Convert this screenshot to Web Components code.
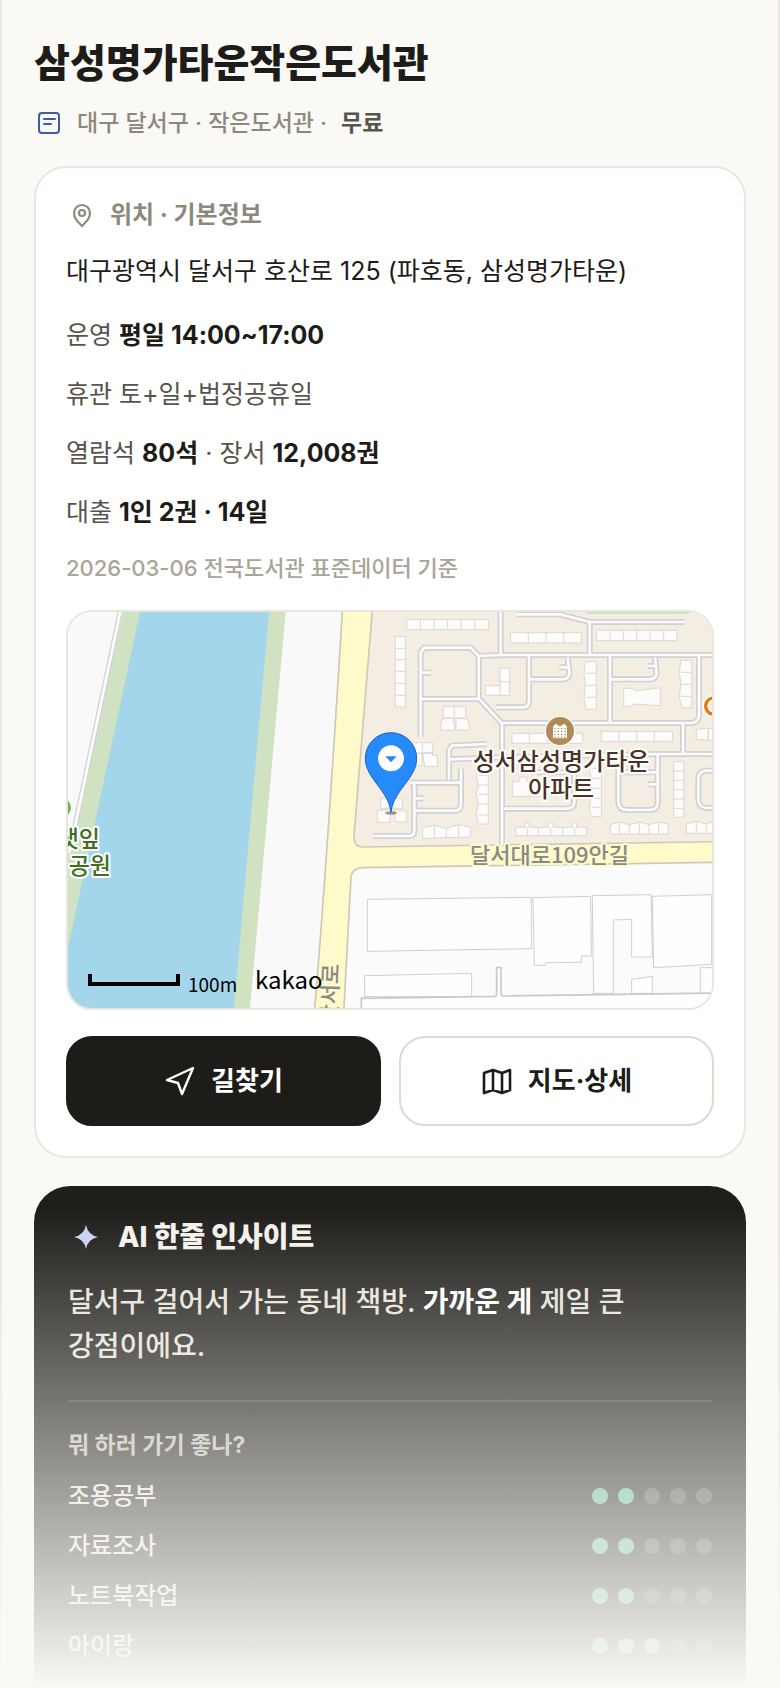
<!DOCTYPE html>
<html lang="ko">
<head>
<meta charset="utf-8">
<meta name="viewport" content="width=device-width, initial-scale=1">
<title>삼성명가타운작은도서관</title>
<style>
    body {
        margin: 0;
        background: #faf9f5;
        color: #1d1c18;
        font-family: Inter, "Noto Sans CJK KR", sans-serif;
        font-size: 24px;
    }
    insight-card b { color: #fff; }
</style>
</head>
<body>
<library-page>
    <place-header>
        <span slot="name">삼성명가타운작은도서관</span>
        <span slot="meta">대구 달서구 · 작은도서관 ·</span>
        <span slot="price">무료</span>
    </place-header>
    <info-card>
        <span slot="title">위치 · 기본정보</span>
        <span slot="address">대구광역시 달서구 호산로 125 (파호동, 삼성명가타운)</span>
        <info-row>운영 <b>평일 14:00~17:00</b></info-row>
        <info-row>휴관 토+일+법정공휴일</info-row>
        <info-row>열람석 <b>80석</b> · 장서 <b>12,008권</b></info-row>
        <info-row>대출 <b>1인 2권 · 14일</b></info-row>
        <span slot="source">2026-03-06 전국도서관 표준데이터 기준</span>
        <place-map slot="map"></place-map>
        <action-button slot="actions" icon="route" primary>길찾기</action-button>
        <action-button slot="actions" icon="map">지도·상세</action-button>
    </info-card>
    <insight-card>
        <span slot="title">AI 한줄 인사이트</span>
        <span slot="summary">달서구 걸어서 가는 동네 책방. <b>가까운 게</b> 제일 큰 강점이에요.</span>
        <span slot="question">뭐 하러 가기 좋나?</span>
        <score-row score="2">조용공부</score-row>
        <score-row score="2">자료조사</score-row>
        <score-row score="2">노트북작업</score-row>
        <score-row score="3">아이랑</score-row>
    </insight-card>
</library-page>

<script>
const icons = {
    note: `<svg width="28" height="28" viewBox="0 0 28 28" fill="none" stroke="currentColor" stroke-width="2" stroke-linecap="round" stroke-linejoin="round">
        <rect x="4" y="4" width="20" height="20" rx="3"/><path d="M9 10h11M9 15h7"/></svg>`,
    pin: `<svg width="28" height="28" viewBox="0 0 28 28" fill="none" stroke="currentColor" stroke-width="2.2" stroke-linejoin="round">
        <path d="M14 25C9 20 6 17 6 12a8 8 0 0 1 16 0c0 5-3 8-8 13z"/><circle cx="14" cy="12" r="3"/></svg>`,
    route: `<svg width="32" height="32" viewBox="0 0 32 32" fill="none" stroke="currentColor" stroke-width="2.4" stroke-linejoin="round">
        <path d="M29 3 3 15l11 3 4 11z"/></svg>`,
    map: `<svg width="32" height="32" viewBox="0 0 32 32" fill="none" stroke="currentColor" stroke-width="2.6" stroke-linejoin="round">
        <path d="M3 8l9-3 9 3 8-3v20l-8 3-9-3-9 3zM12 5v20M21 8v20"/></svg>`,
    spark: `<svg width="28" height="28" viewBox="0 0 28 28" fill="currentColor">
        <path d="M14 2q2 10 12 12q-10 2-12 12q-2-10-12-12q10-2 12-12z"/></svg>`
};

class BaseElement extends HTMLElement {
    constructor(){
        super();
        this.attachShadow({ mode: "open" });
    }
    connectedCallback(){
        const template = document.createElement('template');
        template.innerHTML = this.getStyles() + this.getTemplate();
        this.shadowRoot.replaceChildren(template.content.cloneNode(true));
    }
}

class LibraryPage extends BaseElement {
    getTemplate(){
        return `<main><slot></slot></main><div class="fade"></div>`;
    }
    getStyles(){
        return `
            <style>
                :host {
                    display: block;
                    position: relative;
                    box-sizing: border-box;
                    min-height: 100vh;
                    border: solid #e9e7e0;
                    border-width: 0 2px;
                }
                main {
                    display: flex;
                    flex-direction: column;
                    padding: 37px 32px 0;
                }
                /* covers the side borders too */
                .fade {
                    position: absolute;
                    left: -2px;
                    right: -2px;
                    bottom: 0;
                    height: 480px;
                    background: linear-gradient(rgba(250, 249, 245, 0), #faf9f5);
                    pointer-events: none;
                }
            </style>
        `;
    }
}

class PlaceHeader extends BaseElement {
    getTemplate(){
        return `
            <h1><slot name="name"></slot></h1>
            <p>${icons.note}<slot name="meta"></slot><strong><slot name="price"></slot></strong></p>
        `;
    }
    getStyles(){
        return `
            <style>
                :host { display: block; margin-bottom: 25px; }
                h1 {
                    margin: 0 0 16px;
                    font-size: 39px;
                    line-height: 52px;
                    font-weight: 800;
                }
                p {
                    display: flex;
                    align-items: center;
                    gap: 14px;
                    margin: 0;
                    font-size: 23px;
                    line-height: 36px;
                    font-weight: 500;
                    color: #8c887c;
                }
                svg { margin-left: 1px; color: #3f5bab; }
                strong { font-weight: 700; color: #57544b; }
            </style>
        `;
    }
}

class InfoCard extends BaseElement {
    getTemplate(){
        return `
            <section>
                <h2>${icons.pin}<slot name="title"></slot></h2>
                <p class="address"><slot name="address"></slot></p>
                <div class="rows"><slot></slot></div>
                <p class="source"><slot name="source"></slot></p>
                <slot name="map"></slot>
                <div class="actions"><slot name="actions"></slot></div>
            </section>
        `;
    }
    getStyles(){
        return `
            <style>
                :host { display: block; margin-bottom: 28px; }
                section {
                    padding: 30px;
                    border: 2px solid #e9e7e0;
                    border-radius: 32px;
                    background: #fff;
                }
                h2 {
                    display: flex;
                    align-items: center;
                    gap: 14px;
                    margin: 0 0 19px 2px;
                    font-size: 24px;
                    line-height: 34px;
                    font-weight: 700;
                    color: #8c887c;
                }
                p { margin: 0; }
                .address { font-size: 25px; line-height: 40px; }
                .rows {
                    display: flex;
                    flex-direction: column;
                    gap: 19px;
                    margin: 24px 0 19px;
                }
                .source {
                    margin-bottom: 25px;
                    font-size: 22px;
                    line-height: 34px;
                    font-weight: 500;
                    color: #a8a498;
                }
                .actions {
                    display: grid;
                    grid-template-columns: 1fr 1fr;
                    gap: 18px;
                    margin-top: 26px;
                }
            </style>
        `;
    }
}

class InfoRow extends BaseElement {
    getTemplate(){
        return `<slot></slot>`;
    }
    getStyles(){
        return `
            <style>
                :host {
                    display: block;
                    font-size: 25px;
                    line-height: 40px;
                    color: #57544b;
                }
                ::slotted(b) { font-weight: 700; color: #1d1c18; }
            </style>
        `;
    }
}

class ActionButton extends BaseElement {
    getTemplate(){
        return `<button type="button">${icons[this.getAttribute('icon')]}<slot></slot></button>`;
    }
    getStyles(){
        return `
            <style>
                :host { display: block; }
                button {
                    display: flex;
                    align-items: center;
                    justify-content: center;
                    gap: 15px;
                    box-sizing: border-box;
                    width: 100%;
                    height: 90px;
                    border: 2px solid #dddad0;
                    border-radius: 26px;
                    background: #fff;
                    color: #1d1c18;
                    font: 700 26px/36px Inter, "Noto Sans CJK KR", sans-serif;
                    cursor: pointer;
                }
                :host([primary]) button {
                    border-color: #1d1c18;
                    background: #1d1c18;
                    color: #fff;
                }
            </style>
        `;
    }
}

class PlaceMap extends BaseElement {
    getTemplate(){
        return `
            <svg viewBox="0 0 644 396" preserveAspectRatio="xMidYMid slice" role="img" aria-label="지도">
                <g transform="scale(.33333) translate(-24 -36)">
                    <path fill="#f9f9f9" d="M0 0h2000v1300H0z"/>
                    <path fill="#d0e2c1" d="M190 36H677L570 1224H24V760z"/>
                    <path fill="#a3d6eb" d="M240 36H627L522 1224H24V1045z"/>
                    <path stroke="#d2d2d4" stroke-width="16" d="M182 30 28 760"/>
                    <path stroke="#fdfdfd" stroke-width="8" d="M182 30 28 760"/>
                    <circle cx="6" cy="623" r="27" fill="#6db544"/>

                    <!-- yellow roads, then the blocks beside them -->
                    <path fill="#fefaca" stroke="#cfc8ba" stroke-width="5" d="M848 20 Q800 800 763 1240H2000V20z"/>
                    <path fill="#f3ede2" stroke="#cfc8ba" stroke-width="5" d="M938 20 882 706Q880 741 910 741L1970 725V20z"/>
                    <path fill="#fbfbfb" stroke="#cfc8ba" stroke-width="5" d="M851 1240 873 832Q876 804 908 803L1970 787V1240z"/>

                    <g transform="translate(960 0)">
                        <path fill="#c9e2b0" d="M612 30H932L926 41H622z"/>
                        <g fill="none" stroke-linejoin="round">
                            <g stroke="#d1d1d4" stroke-width="18"><use href="#lanes"/></g>
                            <g stroke="#fbfbfb" stroke-width="8"><use href="#lanes"/></g>
                        </g>
                        <g fill="#fdfcfb" stroke="#d9d7d4" stroke-width="3">
                            <path d="M80 59h245v30H80zM121 59v30M162 59v30M203 59v30M243 59v30M284 59v30"/>
                            <path d="M46 110h30v211H46zM46 145h30M46 179h30M46 214h30M46 250h30M46 286h30"/>
                            <path d="M391 98h213v31H391zM445 98v31M498 98v31M551 98v31"/>
                            <path d="M649 91h241v31H649zM690 91v31M730 91v31M770 91v31M810 91v31M851 91v31"/>
                            <path d="M360 204h29v82h-73v-29h44zM360 245h29M360 257v29"/>
                            <path d="M190 320h67v34h-67zM223 320v34M185 357l35-3 5 36h-44zM228 354l36 3 5 33h-41z"/>
                            <path d="M617 185h32v143h-32l-5-36 4-36-4-36zM616 220h33M616 256h33M616 292h33"/>
                            <path d="M903 181h32v142h-30l-7-34 5-36-5-36zM901 217h34M901 253h34M901 289h34"/>
                            <path d="M731 265h27l8 8 75-10v54l-83-5v5l-27 3z"/>
                            <path d="M396 400h212v30H396zM448 400v30M501 400v30M554 400v30"/>
                            <path d="M664 394h213v30H664zM717 394v30M770 394v30M823 394v30"/>
                            <path d="M949 388l36-4v37l-36-3zM985 386h20v35h-20z"/>
                            <path d="M94 428h64v32H94zM127 428v32M90 460h36v37H94zM128 458h30v8h14v33h-38z"/>
                            <path d="M2 595h65v31H2zM-8 632l38-3v38H-8zM41 630l39 3v33H47z"/>
                            <path d="M295 485h30v187h-30l-6-32 6-28-6-29 6-28-6-29zM295 526h30M295 555h30M295 583h30M295 612h30M295 645h30"/>
                            <path d="M634 478h30v172h-30l-6-27 6-28-6-30 6-30-6-30zM634 505h30M634 535h30M634 565h30M634 595h30M634 622h30"/>
                            <path d="M881 485h30v167h-30zM881 513h30M881 541h30M881 569h30M881 597h30M881 625h30"/>
                            <path d="M397 545h20l4-14h16l5 14h60v44H397z"/>
                            <path d="M128 684l35-8 36 9 37-11 35 8v29l-143 4zM163 677v36M199 685v27M236 675v36"/>
                            <path d="M407 682h28v-13h12v13h58v-14h14v14h59v-14h12v14h30v25H407zM442 682v25M475 682v25M512 682v25M548 682v25M584 682v25"/>
                            <path d="M691 674l27-8 30 8 30-8 29 8 30-8 28 7v29H691zM718 668v35M748 674v29M778 668v35M807 674v29M836 668v35"/>
                            <path d="M919 672l30-8 30 8 27-8v36h-87zM949 666v34M979 672v28"/>
                        </g>
                        <g fill="#fefefe" stroke="#cfcfcf" stroke-width="3">
                            <path d="M-38 898 454 892V1046L-38 1054z"/>
                            <path d="M459 893 632 889 634 1068H604V1087L496 1088V1096H463z"/>
                            <path d="M637 887 813 884 817 1071H755V958L700 960V1180H641z"/>
                            <path d="M817 889 995 884V1093L821 1103z"/>
                            <path d="M-46 1127 275 1120V1190H-46zM755 1138 817 1129V1180H755zM961 1103H1010V1180H961z"/>
                        </g>
                        <path fill="#fefefe" stroke="#c9c9ca" stroke-width="5" d="M-56 1240V1195L345 1189Q350 1188 350 1180V1103H363V1180Q363 1188 370 1188L1010 1179V1240z"/>
                        <path fill="none" stroke="#fff" stroke-width="20" d="M1008 298Q990 290 982 304Q970 318 982 334Q990 346 1008 340"/>
                        <path fill="none" stroke="#e8790e" stroke-width="10" d="M1008 295Q990 291 982 303Q972 318 982 333Q990 345 1008 341"/>
                    </g>

                    <!-- apartment badge -->
                    <g transform="translate(1500 393)">
                        <circle r="46" fill="#fff"/>
                        <circle r="42" fill="#b08a56"/>
                        <path fill="#fff" d="M-21 22V-12L-15-20-9-20-4-15H4L9-20 15-20 21-12V22z"/>
                        <path stroke="#b08a56" stroke-width="4" stroke-dasharray="4 6" d="M-17-7H19M-17 2H19M-17 11H19M-17 19H19"/>
                    </g>

                    <!-- marker -->
                    <g transform="translate(993 475)">
                        <ellipse cy="164" rx="18" ry="5" fill="#555" opacity=".6"/>
                        <path fill="#258bfb" stroke="#1a5fc4" stroke-width="3" d="M0 161C-8 95-77 60-77 0A77 77 0 0 1 77 0C77 60 8 95 0 161z"/>
                        <circle r="39" fill="#fff"/>
                        <path fill="#258bfb" d="M-17-6H17L0 12z"/>
                    </g>
                    <path fill="none" stroke="#000" stroke-width="12" d="M90 1122V1152H354V1122"/>
                </g>
                <g class="labels">
                    <g fill="#406f24" stroke="#fff" text-anchor="end">
                        <text x="32" y="235">댓잎</text>
                        <text x="43" y="262">공원</text>
                    </g>
                    <g class="apt" fill="#4b3224" stroke="#fff" text-anchor="middle">
                        <text x="493" y="158">성서삼성명가타운</text>
                        <text x="493" y="185">아파트</text>
                    </g>
                    <g class="road" fill="#888" stroke="#fefaca">
                        <text x="402" y="251">달서대로109안길</text>
                        <text transform="translate(271 352) rotate(-88)" text-anchor="end">산서로</text>
                    </g>
                </g>
                <text class="scale" x="120" y="380">100m</text>
                <text class="brand" x="187" y="377">kakao</text>
                <defs>
                    <g id="lanes">
                        <path d="M295 168 362 165H1010M362 20V165M410 43H540L630 66H913M629 66V165"/>
                        <path d="M122 411V158L132 143H272L296 168V295L366 370V735M122 297H294M122 218H153"/>
                        <path d="M366 369H935Q957 367 957 345V165M447 165V303Q447 322 430 322H348"/>
                        <path d="M447 238H550Q568 236 568 218L563 172M538 202H566M690 165V369"/>
                        <path d="M690 238H813Q830 234 830 220L825 172M803 198H828M909 369V462"/>
                        <path d="M320 432 215 437 207 450V540M210 478 366 472 833 462H1010"/>
                        <path d="M90 548H240M243 506V612Q243 632 225 632H103M103 548V692Q103 708 86 708H-20M103 595H131"/>
                        <path d="M715 517H833M833 462V605Q833 630 810 630H742Q716 630 715 605V506M805 553H833"/>
                        <path d="M1010 512H978Q955 515 955 535V600Q957 622 980 624H1010"/>
                        <path d="M372 626H562Q583 624 583 605V515M470 517H583"/>
                    </g>
                </defs>
            </svg>
        `;
    }
    getStyles(){
        return `
            <style>
                :host {
                    display: block;
                    box-sizing: border-box;
                    height: 400px;
                    overflow: hidden;
                    border: 2px solid #e9e6e0;
                    border-radius: 26px;
                }
                svg { display: block; width: 100%; height: 100%; }
                .labels {
                    font: 500 23px "Noto Sans CJK KR", sans-serif;
                    stroke-width: 4px;
                    stroke-linejoin: round;
                }
                .labels text { paint-order: stroke; }
                .apt { font-size: 24px; }
                .road { font-size: 22px; }
                .scale { font: 19px "Noto Sans CJK KR", sans-serif; }
                .brand { font: 24px "Noto Sans CJK KR", sans-serif; }
            </style>
        `;
    }
}

class InsightCard extends BaseElement {
    getTemplate(){
        return `
            <section>
                <h2>${icons.spark}<slot name="title"></slot></h2>
                <p><slot name="summary"></slot></p>
                <h3><slot name="question"></slot></h3>
                <div class="scores"><slot></slot></div>
            </section>
        `;
    }
    getStyles(){
        return `
            <style>
                :host { display: block; }
                section {
                    padding: 31px 34px 25px;
                    border-radius: 36px 36px 0 0;
                    background: #1f1e1a;
                }
                h2 {
                    display: flex;
                    align-items: center;
                    gap: 18px;
                    margin: 0 0 23px 4px;
                    font-size: 28px;
                    line-height: 40px;
                    font-weight: 800;
                    color: #f3f1ea;
                }
                svg { color: #c6d2f2; }
                p {
                    margin: 0;
                    padding-bottom: 32px;
                    border-bottom: 2px solid #3a3935;
                    font-size: 28px;
                    line-height: 44px;
                    font-weight: 500;
                    color: #e6e3da;
                    word-break: keep-all;
                }
                h3 {
                    margin: 27px 0 18px;
                    font-size: 23px;
                    line-height: 32px;
                    font-weight: 700;
                    color: #bbb8ae;
                }
                .scores { display: flex; flex-direction: column; gap: 16px; }
            </style>
        `;
    }
}

class ScoreRow extends BaseElement {
    getTemplate(){
        const score = Number(this.getAttribute('score'));
        let dots = '';
        for(let i = 0; i < 5; i++){
            dots += `<i class="${i < score ? 'on' : ''}"></i>`;
        }
        return `<slot></slot><div role="img" aria-label="${score}/5">${dots}</div>`;
    }
    getStyles(){
        return `
            <style>
                :host {
                    display: flex;
                    align-items: center;
                    justify-content: space-between;
                    font-size: 24px;
                    line-height: 34px;
                    font-weight: 500;
                    color: #e6e3da;
                }
                div { display: flex; gap: 10px; }
                i {
                    width: 16px;
                    height: 16px;
                    border-radius: 50%;
                    background: #484743;
                }
                .on { background: #57b98e; }
            </style>
        `;
    }
}

customElements.define('library-page', LibraryPage);
customElements.define('place-header', PlaceHeader);
customElements.define('info-card', InfoCard);
customElements.define('info-row', InfoRow);
customElements.define('action-button', ActionButton);
customElements.define('place-map', PlaceMap);
customElements.define('insight-card', InsightCard);
customElements.define('score-row', ScoreRow);
</script>
</body>
</html>
